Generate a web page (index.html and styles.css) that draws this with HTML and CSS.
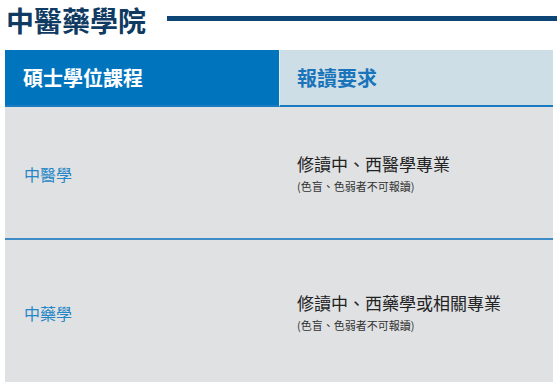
FILE: index.html
```html
<!DOCTYPE html>
<html lang="zh-Hant">
<head>
<meta charset="utf-8">
<link rel="stylesheet" href="styles.css">
</head>
<body>
<div class="title-row">
  <h1 class="title">中醫藥學院</h1>
  <div class="title-line"></div>
</div>
<div class="table">
  <div class="head head-left">碩士學位課程</div>
  <div class="head head-right">報讀要求</div>
  <div class="cell cell-left row1">中醫學</div>
  <div class="cell cell-right row1">
    <div class="req">修讀中、西醫學專業</div>
    <div class="note">(色盲、色弱者不可報讀)</div>
  </div>
  <div class="cell cell-left row2">中藥學</div>
  <div class="cell cell-right row2">
    <div class="req">修讀中、西藥學或相關專業</div>
    <div class="note">(色盲、色弱者不可報讀)</div>
  </div>
</div>
</body>
</html>
```
FILE: styles.css
```css
*, *::before, *::after {
  box-sizing: border-box;
}
html, body {
  margin: 0;
  padding: 0;
  background: #ffffff;
}
body {
  font-family: "Noto Sans CJK TC", "Noto Sans", sans-serif;
  width: 557px;
  height: 385px;
  overflow: hidden;
}
.title-row {
  display: flex;
  align-items: flex-start;
  height: 41px;
  padding-left: 6px;
  gap: 21px;
}
.title {
  margin: 0;
  font-size: 28px;
  line-height: 41px;
  font-weight: 700;
  color: #0f3a62;
  white-space: nowrap;
}
.title-line {
  flex: 1;
  height: 5px;
  background: #0d4576;
  margin-top: 16px;
}
.table {
  margin: 9px 0 0 5px;
  width: 548px;
  display: grid;
  grid-template-columns: 274px 1fr;
}
.head {
  height: 57px;
  display: flex;
  align-items: center;
  font-size: 20px;
  font-weight: 700;
  border-bottom: 2px solid #1a7ac2;
}
.head-left {
  background: #0075be;
  color: #ffffff;
  padding-left: 18px;
}
.head-right {
  background: #cedee7;
  color: #1a74ba;
  padding-left: 17px;
  border-left: 1px solid #e4ecf1;
}
.cell {
  background: #e0e1e3;
  display: flex;
  flex-direction: column;
  justify-content: center;
}
.row1 {
  height: 133px;
  border-bottom: 2px solid #3f8bc5;
}
.row2 {
  height: 142px;
}
.cell-left {
  padding-left: 19px;
  font-size: 16px;
  color: #2586c6;
  padding-top: 3px;
}
.cell-right {
  padding-left: 18px;
  padding-top: 2px;
}
.req {
  font-size: 17px;
  line-height: 22px;
  color: #222222;
}
.note {
  font-size: 11px;
  line-height: 16px;
  margin-top: 3px;
  color: #333333;
}
```
